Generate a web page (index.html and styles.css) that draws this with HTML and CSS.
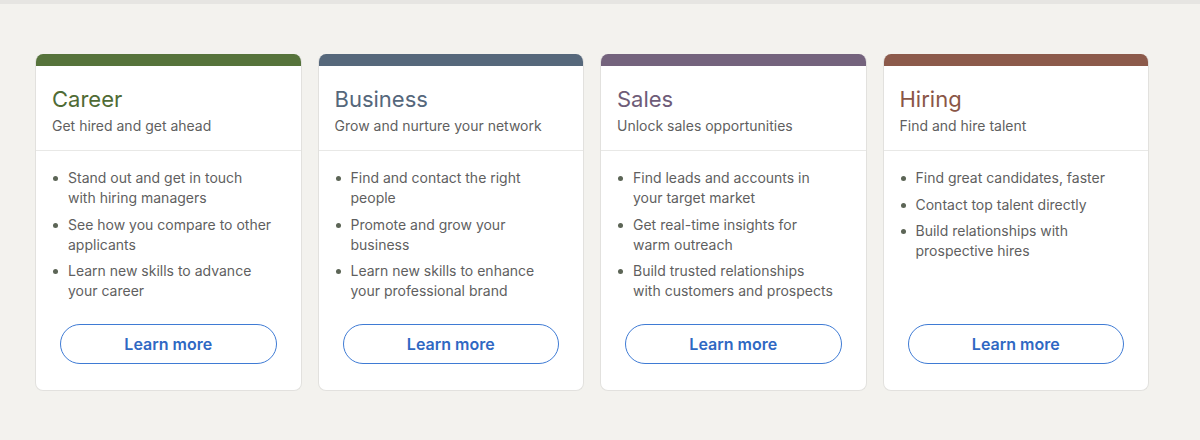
FILE: index.html
```html
<!DOCTYPE html>
<html lang="en">
<head>
    <meta charset="UTF-8">
    <title>Products</title>

    <link rel="stylesheet" href="styles.css">
</head>
<body>
<div class="topbar"></div>
<main class="cards">
    <section class="card career">
        <header class="card-head">
            <h2>Career</h2>
            <p>Get hired and get ahead</p>
        </header>
        <div class="card-body">
            <ul>
                <li>Stand out and get in touch with hiring managers</li>
                <li>See how you compare to other applicants</li>
                <li>Learn new skills to advance your career</li>
            </ul>
            <a class="learn" href="#">Learn more</a>
        </div>
    </section>
    <section class="card business">
        <header class="card-head">
            <h2>Business</h2>
            <p>Grow and nurture your network</p>
        </header>
        <div class="card-body">
            <ul>
                <li>Find and contact the right people</li>
                <li>Promote and grow your business</li>
                <li>Learn new skills to enhance your professional brand</li>
            </ul>
            <a class="learn" href="#">Learn more</a>
        </div>
    </section>
    <section class="card sales">
        <header class="card-head">
            <h2>Sales</h2>
            <p>Unlock sales opportunities</p>
        </header>
        <div class="card-body">
            <ul>
                <li>Find leads and accounts in your target market</li>
                <li>Get real-time insights for warm outreach</li>
                <li>Build trusted relationships<br>with customers and prospects</li>
            </ul>
            <a class="learn" href="#">Learn more</a>
        </div>
    </section>
    <section class="card hiring">
        <header class="card-head">
            <h2>Hiring</h2>
            <p>Find and hire talent</p>
        </header>
        <div class="card-body">
            <ul>
                <li>Find great candidates, faster</li>
                <li>Contact top talent directly</li>
                <li>Build relationships with prospective hires</li>
            </ul>
            <a class="learn" href="#">Learn more</a>
        </div>
    </section>
</main>
</body>
</html>
```

FILE: styles.css
```css
html, body {
    margin: 0;
    padding: 0;
    background: #f3f2ee;

    font-family: Inter, 'Noto Sans', Arial, sans-serif;
}

.topbar {
    height: 4px;
    background: #e6e5e2;
}

.cards {
    display: grid;
    grid-template-columns: repeat(4, 1fr);
    gap: 16px;
    padding: 50px 51px 0 35px;
}

.card {
    display: flex;
    flex-direction: column;
    background: #fff;
    border: 1px solid #e2e1de;
    border-top: 0;
    border-radius: 8px;
    overflow: hidden;
}

.card-head {
    border-top: 12px solid;
    padding: 18px 16px 14px;
    border-bottom: 1px solid #e8e8e6;
}

.card-head h2 {
    margin: 0 0 2px;
    font-size: 22px;
    font-weight: 400;
    line-height: 30px;
}

.card-head p {
    margin: 0;
    font-size: 14px;
    line-height: 20px;
    color: #5f5f5f;
}

.career .card-head { border-top-color: #56733b; }
.career h2 { color: #4f6b35; }
.business .card-head { border-top-color: #56687b; }
.business h2 { color: #55677b; }
.sales .card-head { border-top-color: #74637d; }
.sales h2 { color: #6e5c78; }
.hiring .card-head { border-top-color: #8c5a4b; }
.hiring h2 { color: #8a5646; }

.card-body {
    flex: 1;
    display: flex;
    flex-direction: column;
    padding: 17px 24px 26px;
}

.card-body ul {
    list-style: none;
    margin: 0 0 23px;
    padding: 0 5px 0 0;
    display: flex;
    flex-direction: column;
    gap: 6.5px;
}

.card-body li {
    position: relative;
    padding-left: 16px;
    margin-left: -8px;
    font-size: 14px;
    line-height: 20px;
    color: #5f5f5f;
}

.card-body li::before {
    content: '';
    position: absolute;
    left: 1px;
    top: 8px;
    width: 5px;
    height: 5px;
    border-radius: 50%;
    background: #5c6556;
}

.learn {
    margin-top: auto;
    display: block;
    height: 38px;
    line-height: 38px;
    border: 1px solid #3f7bd4;
    border-radius: 20px;
    text-align: center;
    text-decoration: none;
    font-size: 16px;
    font-weight: 600;
    color: #2f68c3;
}
```
